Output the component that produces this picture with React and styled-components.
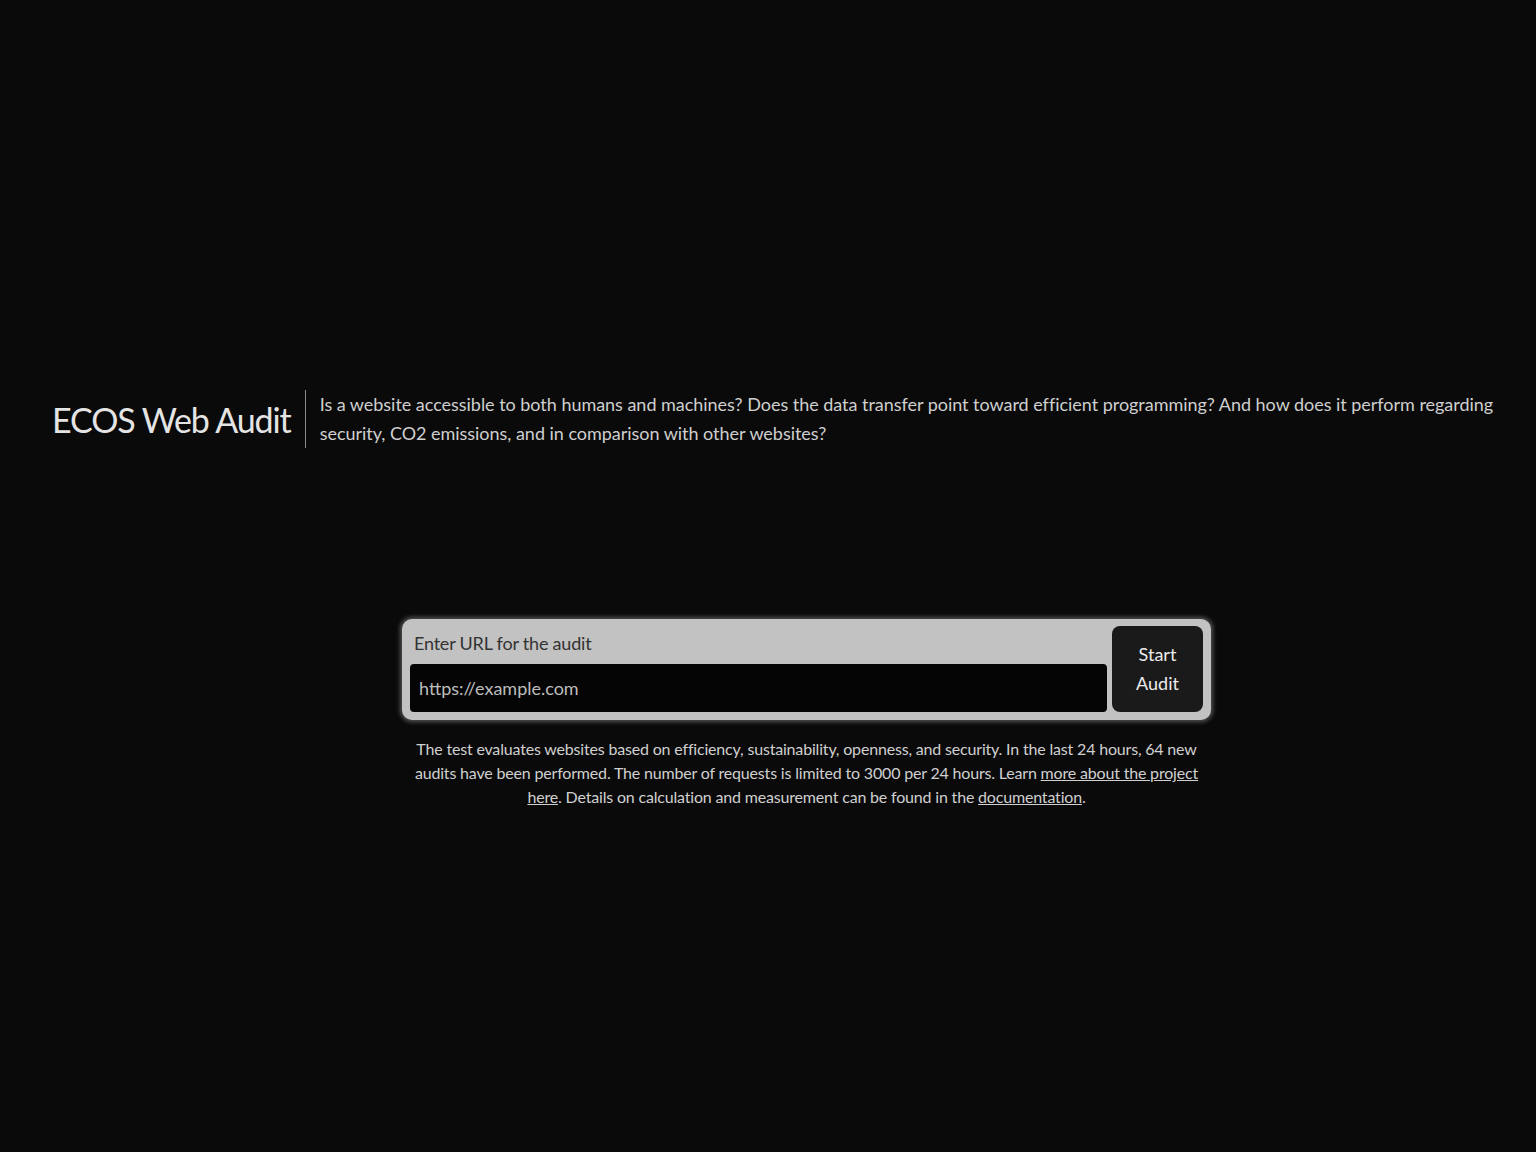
import React from "react";
import styled, { createGlobalStyle } from "styled-components";

const GlobalStyle = createGlobalStyle`
  html, body {
    margin: 0;
    padding: 0;
    background: #0a0a0a;
  }
  body {
    font-family: Lato, "Liberation Sans", sans-serif;
    color: #d4d4d4;
  }
`;

const Page = styled.main`
  min-height: 1152px;
  box-sizing: border-box;
  padding-top: 390px;
  display: flex;
  flex-direction: column;
`;

const Header = styled.header`
  display: flex;
  align-items: center;
  padding: 0 32px 0 52px;
`;

const Title = styled.h1`
  margin: 0;
  padding-right: 14px;
  font-size: 34px;
  font-weight: 400;
  letter-spacing: -1.1px;
  color: #e4e4e4;
  white-space: nowrap;
`;

const Divider = styled.div`
  flex: none;
  width: 1px;
  height: 58px;
  background: #8a8a8a;
  margin-right: 14px;
`;

const Intro = styled.p`
  margin: 0;
  font-size: 18px;
  line-height: 29px;
  letter-spacing: -0.03px;
  color: #cfcfcf;
`;

const Section = styled.section`
  margin-top: 171px;
  padding-left: 77px;
  display: flex;
  flex-direction: column;
  align-items: center;
`;

const Form = styled.form`
  width: 809px;
  box-sizing: border-box;
  display: flex;
  gap: 5px;
  padding: 7px 8px 8px 8px;
  background: #c2c2c2;
  border-radius: 10px;
  box-shadow: 0 0 4px 2px rgba(170, 170, 170, 0.45);
`;

const Field = styled.label`
  flex: 1;
  display: flex;
  flex-direction: column;
`;

const Label = styled.span`
  padding: 6px 4px 0;
  height: 32px;
  font-size: 18px;
  letter-spacing: -0.2px;
  color: #333;
`;

const Input = styled.input`
  height: 48px;
  box-sizing: border-box;
  border: none;
  border-radius: 4px;
  background: #050505;
  color: #bdbdbd;
  padding: 0 9px;
  font-family: inherit;
  font-size: 18px;
  outline: none;

  &::placeholder {
    color: #bdbdbd;
  }
`;

const Button = styled.button`
  width: 91px;
  border: none;
  border-radius: 8px;
  background: #1a1a1a;
  color: #ececec;
  font-family: inherit;
  font-size: 18px;
  line-height: 29px;
  padding: 0 16px;
  cursor: pointer;
`;

const Note = styled.p`
  width: 800px;
  margin: 17px 0 0;
  font-size: 16px;
  line-height: 24px;
  text-align: center;
  color: #d0d0d0;
  letter-spacing: -0.18px;

  a {
    color: inherit;
    text-decoration: underline;
  }
`;

export default function App() {
  return (
    <>
      <GlobalStyle />
      <Page>
        <Header>
          <Title>ECOS Web Audit</Title>
          <Divider />
          <Intro>
            Is a website accessible to both humans and machines? Does the data
            transfer point toward efficient programming? And how does it
            perform regarding security, CO2 emissions, and in comparison with
            other websites?
          </Intro>
        </Header>
        <Section>
          <Form onSubmit={(e) => e.preventDefault()}>
            <Field>
              <Label>Enter URL for the audit</Label>
              <Input type="url" placeholder="https://example.com" />
            </Field>
            <Button type="submit">Start Audit</Button>
          </Form>
          <Note>
            The test evaluates websites based on efficiency, sustainability,
            openness, and security. In the last 24 hours, 64 new audits have
            been performed. The number of requests is limited to 3000 per 24
            hours. Learn <a href="#about">more about the project here</a>.
            Details on calculation and measurement can be found in the{" "}
            <a href="#docs">documentation</a>.
          </Note>
        </Section>
      </Page>
    </>
  );
}
